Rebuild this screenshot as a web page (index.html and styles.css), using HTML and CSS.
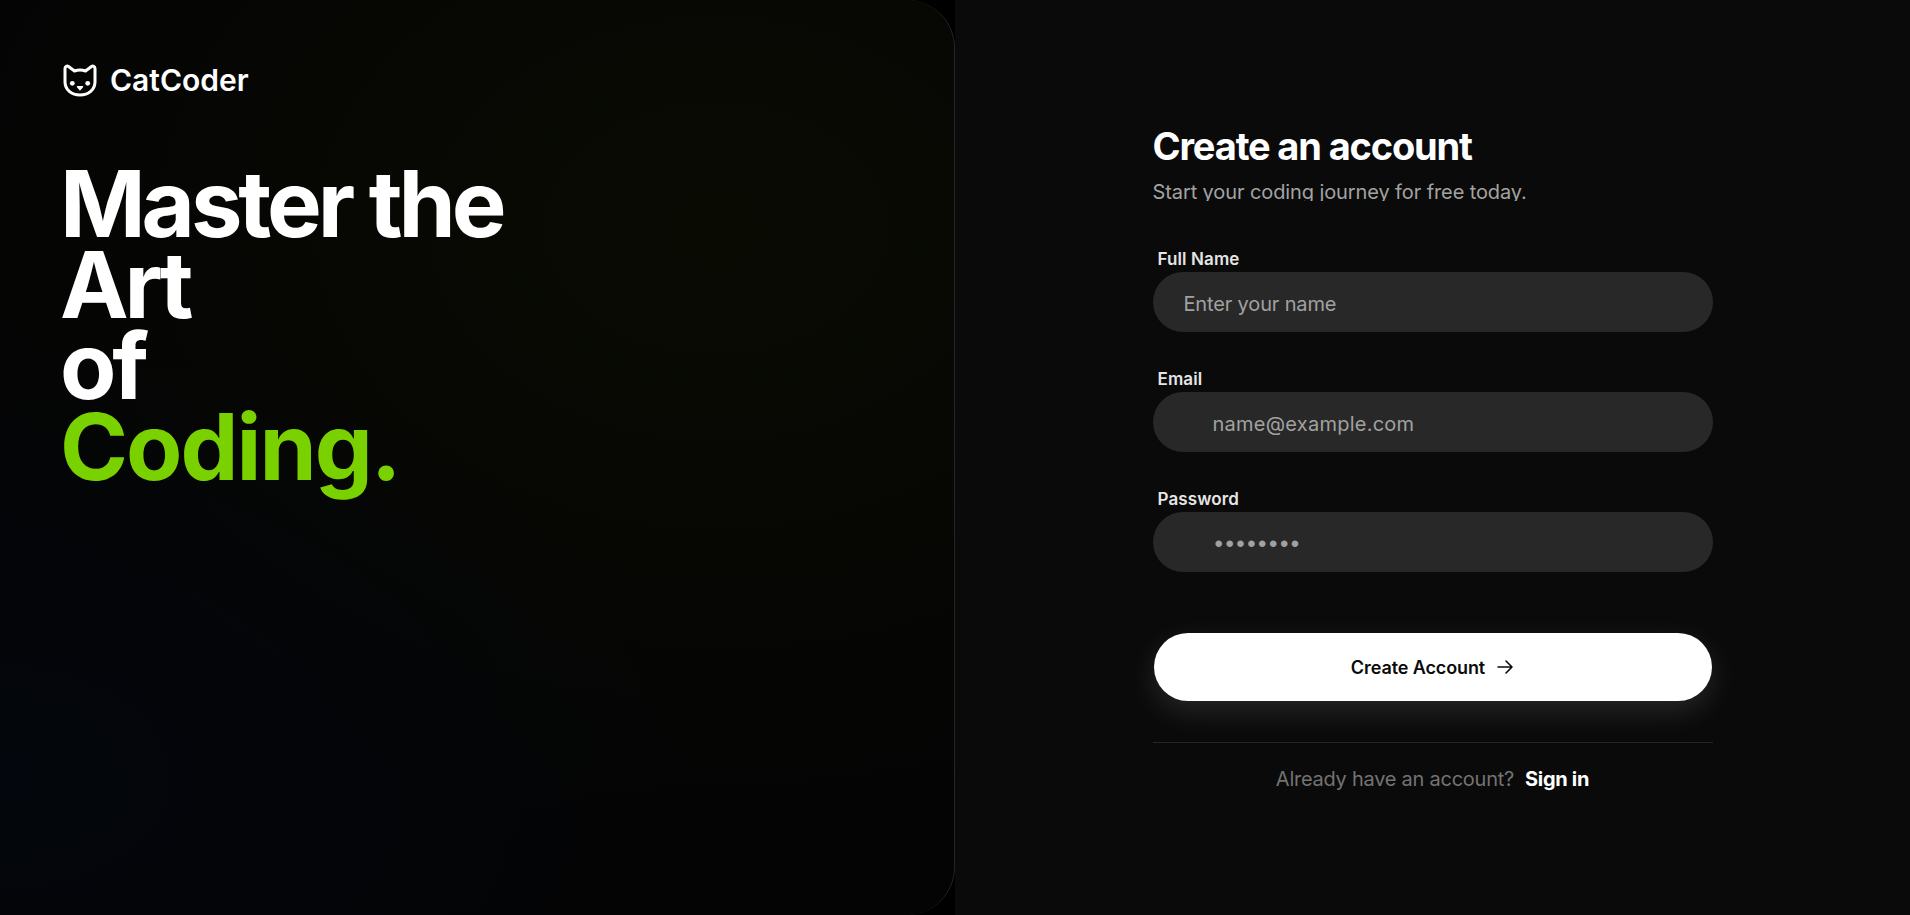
FILE: index.html
```html
<!DOCTYPE html>
<html lang="en">
<head>
<meta charset="utf-8">
<title>CatCoder</title>
<link rel="stylesheet" href="styles.css">
</head>
<body>
<main class="page">
  <section class="hero">
    <div class="brand">
      <svg class="brand-icon" viewBox="0 0 36 36" fill="none" aria-hidden="true">
        <path class="cat-line" d="M3 6.500c0-2 2-3 3.500-2L12.500 9c3.500-1.200 7.500-1.200 11 0l6-4.500c1.500-1 3.500 0 3.500 2V20c0 7.500-6.500 13-15 13S3 27.500 3 20z"/>
        <circle class="cat-dot" cx="10.300" cy="21.300" r="2.400"/>
        <circle class="cat-dot" cx="25.700" cy="21.300" r="2.400"/>
        <path class="cat-nose" d="M15.500 24.700h5L18 27.600z"/>
      </svg>
      <span class="brand-name">CatCoder</span>
    </div>
    <h1 class="headline">Master the<br>Art<br>of<br><span class="accent">Coding.</span></h1>
  </section>
  <section class="panel">
    <div class="card">
      <h2 class="title">Create an account</h2>
      <p class="subtitle">Start your coding journey for free today.</p>
      <form class="form">
        <div class="field">
          <label class="label" for="name">Full Name</label>
          <input class="input input-name" id="name" type="text" placeholder="Enter your name">
        </div>
        <div class="field">
          <label class="label" for="email">Email</label>
          <input class="input input-icon" id="email" type="text" placeholder="name@example.com">
        </div>
        <div class="field">
          <label class="label" for="password">Password</label>
          <input class="input input-pass" id="password" type="text" placeholder="••••••••">
        </div>
        <button class="submit" type="button">
          <span>Create Account</span>
          <svg class="arrow" viewBox="0 0 18 18" fill="none" aria-hidden="true"><path d="M2 9h14M10 3 16 9 10 15"/></svg>
        </button>
      </form>
      <div class="foot">
        <span class="foot-text">Already have an account?</span>
        <a class="foot-link" href="#">Sign in</a>
      </div>
    </div>
  </section>
</main>
</body>
</html>
```
FILE: styles.css
```css
* { box-sizing: border-box; }
html, body { margin: 0; height: 100%; background: #0a0a0a; overflow: hidden; }
body { font-family: Inter, "Noto Sans", sans-serif; color: #fff; }
.page { display: grid; grid-template-columns: 955px 955px; height: 915px; background: #0a0a0a; }

.hero {
  height: 915px;
  padding: 60px 62px;
  border-right: 1px solid #262626;
  border-radius: 0 48px 48px 0;
  background:
    radial-gradient(700px 450px at 0% 85%, #03060c 0%, rgba(3,6,12,0) 100%),
    radial-gradient(800px 600px at 75% 25%, #090b03 0%, rgba(9,11,3,0) 100%),
    #040404;
  box-shadow: 0 0 0 48px #000;
  clip-path: inset(0 0 0 0);
}
.brand { display: flex; align-items: center; gap: 12px; height: 40px; }
.brand-icon { width: 36px; height: 36px; flex: none; }
.cat-line { stroke: #fff; stroke-width: 3; stroke-linejoin: round; }
.cat-dot { fill: #fff; }
.cat-nose { fill: #fff; stroke: #fff; stroke-width: 1.500; stroke-linejoin: round; }
.brand-name { font-size: 30px; font-weight: 600; letter-spacing: 0; line-height: 40px; }
.headline {
  margin: 63px 0 0 -2px;
  font-size: 92px;
  font-weight: 650;
  line-height: 81px;
  letter-spacing: -4.100px;
  color: #fff;
}
.accent { color: #7ad100; letter-spacing: -2px; }

.panel { display: flex; justify-content: center; padding-top: 123px; }
.card { width: 560px; }
.title { margin: 0; font-size: 38px; line-height: 46px; font-weight: 700; letter-spacing: -1.150px; }
.subtitle {
  margin: 10px 0 0;
  height: 22px;
  overflow: hidden;
  font-size: 20px;
  line-height: 26px;
  color: #a3a3a3;
  letter-spacing: -0.100px;
}
.form { margin-top: 48px; display: flex; flex-direction: column; gap: 37px; }
.field { display: flex; flex-direction: column; }
.label { height: 23px; padding-left: 5px; font-size: 17px; font-weight: 600; line-height: 20px; color: #e5e5e5; letter-spacing: 0.100px; }
.input {
  width: 100%;
  height: 60px;
  padding: 3px 31px 0;
  border: 0;
  border-radius: 30px;
  background: #282828;
  color: #fff;
  font-family: inherit;
  font-size: 20px;
  font-weight: 400;
  outline: none;
}
.input::placeholder { color: #a1a1a1; opacity: 1; }
.input-name { letter-spacing: -0.150px; }
.input-icon { padding-left: 60px; letter-spacing: 0.250px; }
.input-pass { padding-left: 62px; font-family: "Liberation Sans", sans-serif; font-size: 24px; letter-spacing: 2.500px; }
.submit {
  margin-top: 24px;
  width: 558px;
  height: 68px;
  align-self: center;
  border: 0;
  border-radius: 34px;
  background: #fff;
  color: #0a0a0a;
  font-family: inherit;
  font-size: 18px;
  font-weight: 600;
  letter-spacing: -0.100px;
  display: flex;
  align-items: center;
  justify-content: center;
  gap: 11px;
  box-shadow: 0 10px 30px rgba(255,255,255,0.12);
}
.arrow { width: 18px; height: 18px; stroke: #0a0a0a; stroke-width: 1.600; stroke-linecap: round; stroke-linejoin: round; }
.foot {
  margin-top: 41px;
  padding-top: 23px;
  border-top: 1px solid #262626;
  display: flex;
  justify-content: center;
  gap: 11px;
  font-size: 20px;
  line-height: 26px;
}
.foot-text { color: #737373; letter-spacing: -0.250px; }
.foot-link { color: #fff; font-weight: 700; text-decoration: none; letter-spacing: -0.300px; }
```
